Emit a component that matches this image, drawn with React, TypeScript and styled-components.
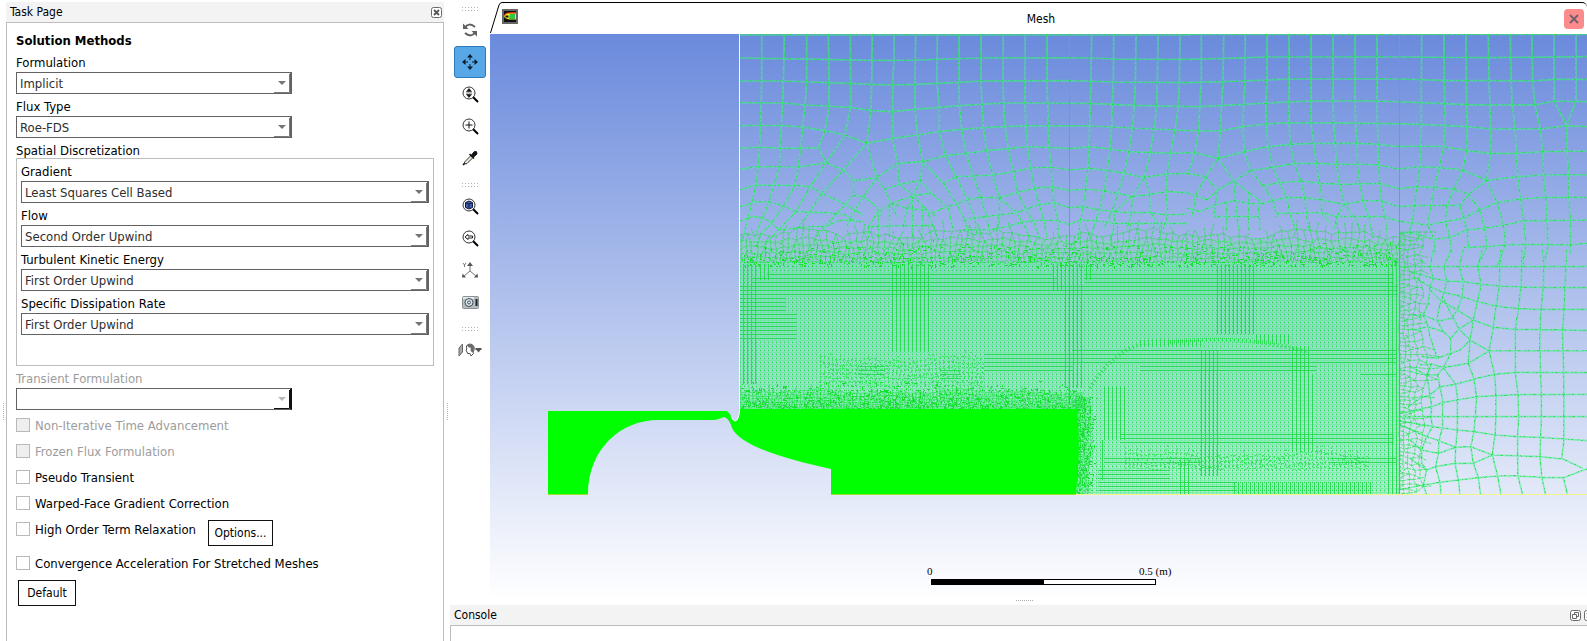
import React from "react";
import styled, { createGlobalStyle, css } from "styled-components";

const GlobalStyle = createGlobalStyle`
  *, *::before, *::after { box-sizing: border-box; }
  body { margin: 0; background: #fff; }
  body, select, input { font-family: "DejaVu Sans Condensed", "DejaVu Sans", sans-serif; font-size: 13px; }
  button { font-family: "DejaVu Sans Condensed", "DejaVu Sans", sans-serif; font-size: 12px; }
`;

/* ---------- layout ---------- */

const Window = styled.div`
  display: grid;
  grid-template-columns: 6px 438px 6px minmax(0, 1fr);
  min-height: 100vh;
  padding-top: 2px;
  color: #000;
  overflow: hidden;
`;

const SideGrip = styled.div`
  display: flex;
  align-items: center;
  justify-content: center;
  &::before {
    content: "";
    height: 17px;
    margin-top: 180px;
    border-left: 1px dotted #b4b4b4;
  }
`;

const TaskPanel = styled.section`
  display: flex;
  flex-direction: column;
`;

const PaneHeader = styled.header`
  display: flex;
  align-items: center;
  justify-content: space-between;
  height: 20px;
  padding: 0 2px 0 4px;
  background: #f3f3f3;
`;

const PaneTitle = styled.h2`
  margin: 0;
  font-size: 12px;
  font-weight: 400;
`;

const HeaderButtons = styled.div`
  display: flex;
  gap: 3px;
  margin-right: -8px;
`;

const IconButton = styled.button`
  display: flex;
  padding: 0;
  border: 0;
  background: none;
`;

const TaskBody = styled.form`
  flex: 1;
  padding: 9px 9px 8px;
  border: 1px solid #bdbdbd;
  border-bottom: 0;
`;

const Heading = styled.h1`
  margin: 0;
  font-size: 13px;
  line-height: 18px;
  font-weight: 700;
`;

const FieldLabel = styled.label<{ $muted?: boolean }>`
  display: block;
  height: 22px;
  padding-top: 4px;
  line-height: 18px;
  color: ${(p) => (p.$muted ? "#9c9c9c" : "#000")};
`;

const SelectBox = styled.div<{ $width?: string; $disabled?: boolean }>`
  display: grid;
  width: ${(p) => p.$width ?? "100%"};
  height: 22px;
  border: 1px solid #626262;
  border-right: 2px solid ${(p) => (p.$disabled ? "#111" : "#626262")};
  > * { grid-area: 1 / 1; }
  > svg { justify-self: end; align-self: end; pointer-events: none; }
`;

const Select = styled.select`
  appearance: none;
  width: 100%;
  height: 20px;
  padding: 1px 20px 0 3px;
  border: 0;
  background: #fff;
  color: #2e2e2e;
  &:disabled { opacity: 1; }
`;

const GroupTitle = styled.div`
  height: 20px;
  padding-top: 4px;
  line-height: 18px;
`;

const Group = styled.div`
  width: 418px;
  padding: 0 4px 30px;
  border: 1px solid #bdbdbd;
`;

const CheckList = styled.div`
  display: flex;
  flex-direction: column;
  padding-top: 2px;
`;

const CheckRow = styled.div<{ $tall?: boolean }>`
  display: flex;
  gap: 12px;
  height: ${(p) => (p.$tall ? "34px" : "26px")};
`;

const CheckLabel = styled.label<{ $muted?: boolean }>`
  display: flex;
  align-items: center;
  gap: 5px;
  height: 26px;
  color: ${(p) => (p.$muted ? "#9c9c9c" : "#000")};
`;

const CheckBox = styled.input`
  appearance: none;
  width: 14px;
  height: 14px;
  margin: 0;
  border: 1px solid #b9b9b9;
  background: #fff;
  &:disabled { background: #efefef; }
`;

const PushButton = styled.button<{ $width: string }>`
  width: ${(p) => p.$width};
  height: 26px;
  margin-top: 4px;
  padding: 0;
  border: 1px solid #111;
  background: #fff;
  color: #000;
`;

const DefaultRow = styled.div`
  padding-left: 2px;
`;

const Main = styled.main`
  display: flex;
  flex-direction: column;
  min-width: 0;
`;

const Workspace = styled.div`
  display: flex;
  flex: 1;
`;

const Toolbar = styled.nav`
  display: flex;
  flex-direction: column;
  align-items: center;
  width: 40px;
`;

const ToolDots = styled.svg`
  flex: none;
  margin: 9px 0 2px;
  &:first-child { margin-top: 5px; }
`;

const ToolButton = styled.button<{ $active?: boolean }>`
  display: flex;
  align-items: center;
  justify-content: center;
  width: 32px;
  height: 32px;
  padding: 0;
  border: 1px solid transparent;
  border-radius: 3px;
  background: none;
  ${(p) =>
    p.$active &&
    css`
      border-color: #2d78b8;
      background: #58a8e8;
    `}
`;

const Viewer = styled.section`
  display: flex;
  flex: 1;
  flex-direction: column;
  min-width: 0;
`;

const TabBar = styled.header`
  display: flex;
  align-items: center;
  height: 32px;
`;

const TabEdge = styled.svg`
  flex: none;
`;

const TabFace = styled.div`
  display: flex;
  flex: 1;
  align-items: center;
  align-self: stretch;
  padding-right: 3px;
  border-top: 1px solid #000;
  border-top-right-radius: 5px;
  > svg { align-self: flex-start; margin-top: 6px; }
`;

const TabTitle = styled.h2`
  flex: 1;
  margin: 0;
  font-size: 12px;
  font-weight: 400;
  text-align: center;
`;

const CloseButton = styled.button`
  display: flex;
  align-items: center;
  justify-content: center;
  width: 20px;
  height: 20px;
  padding: 0;
  border: 0;
  border-radius: 4px;
  background: #fc8b8b;
`;

const Canvas = styled.div`
  position: relative;
  flex: 1;
  min-height: 560px;
  background: linear-gradient(#6a8adc, #fff);
  > svg { position: absolute; inset: 0; width: 100%; height: 100%; }
`;

const BottomGrip = styled.div`
  height: 6px;
  padding: 1px 0 0 12px;
  &::before {
    content: "";
    display: block;
    width: 17px;
    margin: 0 auto;
    border-top: 1px dotted #aaa;
  }
`;

const Console = styled.section`
  display: flex;
  flex-direction: column;
  height: 36px;
`;

const ConsoleHeader = styled(PaneHeader)`
  height: 21px;
  padding-right: 0;
  border-bottom: 1px solid #bdbdbd;
  overflow: hidden;
`;

const ConsoleOut = styled.div`
  flex: 1;
  border-left: 1px solid #bdbdbd;
`;

/* ---------- form parts ---------- */

interface FieldProps {
  id: string;
  label: string;
  value: string;
  width?: string;
  disabled?: boolean;
}

function Field({ id, label, value, width, disabled }: FieldProps) {
  return (
    <div>
      <FieldLabel htmlFor={id} $muted={disabled}>{label}</FieldLabel>
      <SelectBox $width={width} $disabled={disabled}>
        <Select id={id} disabled={disabled} defaultValue={value}>
          <option value={value}>{value}</option>
        </Select>
        <svg width="16" height="20" viewBox="0 0 16 20" aria-hidden="true">
          <path d="M15.5 1V19.5H0" fill="none" stroke={disabled ? "#111" : "#7a7a7a"} />
          <path d="M4 8h8l-4 4z" fill={disabled ? "#bbb" : "#757575"} />
        </svg>
      </SelectBox>
    </div>
  );
}

function Check({ label, disabled }: { label: string; disabled?: boolean }) {
  return (
    <CheckLabel $muted={disabled}>
      <CheckBox type="checkbox" disabled={disabled} />
      {label}
    </CheckLabel>
  );
}

/* ---------- icons ---------- */

const Dots = () => (
  <ToolDots width="17" height="5" viewBox="0 0 17 5" aria-hidden="true">
    <path d="M0 .5H17M0 3.5H17" stroke="#b4b4b4" strokeDasharray="1 2" />
  </ToolDots>
);

const CloseGlyph = () => (
  <svg width="11" height="11" viewBox="0 0 11 11" aria-hidden="true">
    <rect x=".5" y=".5" width="10" height="10" rx="2" fill="#fff" stroke="#6a6a6a" />
    <path d="M3 3l5 5M8 3l-5 5" stroke="#555" strokeWidth="1.8" />
  </svg>
);

const FloatGlyph = () => (
  <svg width="11" height="11" viewBox="0 0 11 11" aria-hidden="true">
    <rect x=".5" y=".5" width="10" height="10" rx="2" fill="#fff" stroke="#6a6a6a" />
    <path d="M4.5 4.500V2.500h4v4h-2M2.500 4.500h4v4h-4z" fill="none" stroke="#666" />
  </svg>
);

const Lens = ({ children }: { children?: React.ReactNode }) => (
  <svg width="17" height="17" viewBox="0 0 17 17" aria-hidden="true">
    <circle cx="7" cy="7" r="6" fill="#fff" stroke="#333" />
    <path d="M11.200 11.200l4.800 4.800" stroke="#000" strokeWidth="2" />
    {children}
  </svg>
);

const RotateIcon = () => (
  <svg width="16" height="16" viewBox="0 0 16 16" aria-hidden="true">
    <path d="M3 5.500C5 2 9 1.500 13 5M13 10.500C11 14 7 14.500 3 11" fill="none" stroke="#606060" strokeWidth="2" />
    <path d="M1 1.500v5.500h5.500zM15 14.500V9H9.500z" fill="#606060" />
  </svg>
);

const MoveIcon = () => (
  <svg width="16" height="16" viewBox="0 0 16 16" aria-hidden="true">
    <path d="M8 2v4M8 10v4M2 8h4M10 8h4" stroke="#0b1c2b" />
    <path d="M8 0l3 3.500H5zM8 16l3-3.500H5zM0 8l3.500-3v6zM16 8l-3.500-3v6z" fill="#0b1c2b" />
  </svg>
);

const ProbeIcon = () => (
  <svg width="16" height="16" viewBox="0 0 16 16" aria-hidden="true">
    <path d="M2 14l1-2.500 6-6 2 2-6 6z" fill="#efe6da" stroke="#333" />
    <path d="M7.500 4l4.500 4.500M1 15l1.500-1.500" stroke="#111" strokeWidth="1.600" />
    <path d="M9.500 5l3-3.500 2 .2.500 2.300-3.500 3z" fill="#111" stroke="#111" />
  </svg>
);

const AxesIcon = () => (
  <svg width="16" height="17" viewBox="0 0 16 17" aria-hidden="true">
    <path d="M8 2v7L2 14M8 9l6 5M1 1l1.500 2L4 1M2.500 3v2" fill="none" stroke="#777" />
    <path d="M8 0l3 4H5zM0 15.500l.5-4 3.500 4zM16 15.500l-.5-4-3.500 4z" fill="#555" />
  </svg>
);

const CameraIcon = () => (
  <svg width="17" height="14" viewBox="0 0 17 14" aria-hidden="true">
    <rect x=".5" y="1.500" width="16" height="12" rx="1" fill="#b5bcbf" stroke="#8b9295" />
    <path d="M1 3h11" stroke="#e3e8ea" strokeWidth="2" />
    <circle cx="7" cy="7.500" r="4" fill="#dce5e9" stroke="#424a50" />
    <circle cx="7" cy="7.500" r="1.500" fill="#dce5e9" stroke="#3f5568" />
    <path d="M14.500 4v7" stroke="#222" strokeWidth="2" />
  </svg>
);

const HeadIcon = () => (
  <svg width="24" height="14" viewBox="0 0 24 14" aria-hidden="true">
    <path d="M1 5L4.500 1v8L1 13z" fill="#aaa" stroke="#666" />
    <path d="M8.500 3C10 .5 14 .5 15.500 3c1.500 2.500.5 4.500-.5 6l.5 1.500L13 13l-1-2.500H9.500L9 8.500 8 8l.7-2z" fill="#fff" stroke="#555" />
    <path d="M9 2.500c3-2.500 7-1 7 2.500 0 2-.5 3-1.500 4.500L12.500 8c.8-1-.2-2 .3-3.500C11.500 5 10 4 9 2.500z" fill="#6a6a6a" />
    <path d="M17.500 5h6v2h-1l-2 2.500-2-2.500h-1z" fill="#555" />
  </svg>
);

const FluentIcon = () => (
  <svg width="16" height="15" viewBox="0 0 16 15" aria-hidden="true">
    <rect x="1" y="1" width="14" height="13" fill="#111" stroke="#666" strokeWidth="2" />
    <path d="M2 6c1-3 7-3 12-3v2L8 6 3 8z" fill="#e32b13" />
    <path d="M2 7l3-2.500h9v6H7L3 9z" fill="#e9ec18" />
    <path d="M8 5h5v5H7z" fill="#2cc842" />
    <path d="M3.500 6.500h3v2h-3z" fill="#111" />
  </svg>
);

/* ---------- mesh drawing ---------- */

function makeRandom(seed: number) {
  let s = seed;
  return () => {
    s = (s * 1664525 + 1013904223) % 4294967296;
    return s / 4294967296;
  };
}

/*
 * Unstructured band between two lines. The cell size runs from a to b across it,
 * and the first row stays open so that the band merges with what lies outside.
 */
function band(
  seed: number,
  from: number,
  to: number,
  lo: number,
  hi: number,
  a: number,
  b: number,
  swap = false,
) {
  const rnd = makeRandom(seed);
  const rows: [number, number][][] = [];
  let y = from;
  const dir = to > from ? 1 : -1;
  while ((to - y) * dir >= 0) {
    const t = (y - from) / (to - from);
    const size = a + (b - a) * t;
    const row: [number, number][] = [];
    for (let x = lo; x <= hi; x += size * (0.7 + rnd() * 0.6)) {
      const wave = Math.sin(x / 27) * 0.5 + Math.sin(x / 11 + seed) * 0.4;
      row.push([x, y + (rnd() - 0.5) * size * 0.7 + wave * size * (1 - t)]);
    }
    rows.push(row);
    y += size * dir;
  }
  const pt = (p: [number, number]) =>
    swap ? `${p[1].toFixed(1)} ${p[0].toFixed(1)}` : `${p[0].toFixed(1)} ${p[1].toFixed(1)}`;
  let d = "";
  rows.forEach((row, i) => {
    if (i > 0) d += "M" + row.map(pt).join("L");
    const next = rows[i + 1];
    if (!next) return;
    next.forEach((q) => {
      if (i === 0 && rnd() < 0.5) return;
      let best = row[0];
      for (const p of row) if (Math.abs(p[0] - q[0]) < Math.abs(best[0] - q[0])) best = p;
      d += `M${pt(best)}L${pt(q)}`;
    });
  });
  return d;
}

/* Short strokes scattered over a box, thicker towards the high end of y (or x when swapped) */
function speckle(seed: number, x0: number, y0: number, w: number, h: number, count: number, swap = false) {
  const rnd = makeRandom(seed);
  let d = "";
  for (let i = 0; i < count; i++) {
    const along = Math.round(rnd() * w);
    const across = Math.round(Math.sqrt(rnd()) * h);
    const x = swap ? x0 + w - Math.round(Math.sqrt(rnd()) * w) : x0 + along;
    const y = swap ? Math.round(y0 + rnd() * h) : y0 + across;
    d += rnd() < 0.5 ? `M${x} ${y + 0.5}h${1 + Math.round(rnd() * 2)}` : `M${x + 0.5} ${y}v${1 + Math.round(rnd() * 2)}`;
  }
  return d;
}

/* Equally spaced runs: [start, end, low, high] */
type Run = [number, number, number, number];
const columns = (runs: Run[]) =>
  runs.map(([a, b, lo, hi]) => {
    let d = "";
    for (let x = a; x <= b; x += 4) d += `M${x + 0.5} ${lo}V${hi}`;
    return d;
  }).join("");
const lines = (runs: Run[]) =>
  runs.map(([a, b, lo, hi]) => {
    let d = "";
    for (let y = a; y <= b; y += 4) d += `M${lo} ${y + 0.5}H${hi}`;
    return d;
  }).join("");

const upperLeft = [
  "95,15 95,152 92,285 85,410 75,480 60,540 45,600 35,640",
  "163,15 162,85 158,220 150,355 148,410 130,470 112,530 95,570 70,630",
  "230,15 230,155 225,225 212,355 205,410 193,470 160,528 125,578 95,610 75,650",
  "295,15 297,155 297,230 285,302 265,352 288,398 240,470 198,545 145,600 100,650",
  "361,15 362,155 362,230 345,315 288,398",
  "427,15 425,165 423,240 410,340 440,443 463,478 485,520 500,560",
  "410,340 340,420 275,490 240,545 200,600",
  "440,443 400,500 375,540 350,590",
  "492,15 492,90 488,163 488,325 503,400 508,463 550,497 590,540 610,590 625,630",
  "557,15 555,165 555,238 562,313 578,395 570,452 550,497 530,540 520,590",
  "578,395 640,460 680,522 705,570 715,620",
  "570,452 605,490 655,535 670,600",
  "622,15 621,160 628,230 628,305 645,375 678,440 712,508 735,563 740,620",
  "687,15 687,158 688,225 695,297 708,370 730,437 752,500 770,560 780,615",
  "753,15 753,153 756,222 760,293 770,362 788,435 808,503 860,548 890,600 905,640",
  "808,503 808,555 800,600",
  "820,15 819,153 821,220 825,292 835,356 850,425 863,487 888,538 915,585 930,630",
  "886,15 885,152 885,220 888,288 893,352 902,414 914,477 928,525 943,578 950,620",
  "951,15 951,152 953,220 955,287 957,352 963,412 967,470 973,520 983,573 985,620",
  "1085,15 1083,155 1081,220 1079,290 1077,352 1074,415 1067,478 1058,535 1050,580 1045,630",
  "1151,15 1150,155 1147,222 1145,290 1140,357 1132,420 1122,485 1108,540 1092,590 1080,630",
  "1218,15 1216,155 1213,225 1207,295 1197,365 1182,430 1164,490 1145,545 1120,600",
  "1284,15 1282,155 1280,225 1273,297 1260,368 1243,440 1207,500 1205,548 1190,600",
  "1243,440 1260,493 1260,548 1290,590 1290,630",
  "1350,15 1348,155 1345,230 1335,300 1322,370 1310,432 1310,487 1312,555 1300,600",
  "1205,500 1155,545 1150,600 1140,640",
  "30,15 1380,15",
  "30,84 163,86 427,91 557,90 753,84 951,83 1085,84 1151,87 1371,88",
  "30,153 163,153 297,158 427,163 488,165 557,163 687,157 753,153 1018,152 1151,156 1371,158",
  "30,218 158,219 225,225 362,232 423,242 488,245 555,238 688,227 821,219 953,219 1080,220 1213,226 1371,230",
  "30,287 155,286 218,291 285,302 345,315 410,340 488,325 562,315 628,305 695,298 760,293 888,287 1079,288 1145,291 1273,297 1371,302",
  "30,355 90,351 150,355 265,353",
  "503,400 578,395 645,377 708,370 770,362 893,350 957,352 1018,356 1079,350 1140,357 1197,365 1322,370 1371,368",
  "30,418 85,410 205,411 288,398 340,420 370,452 440,443 503,400",
  "678,440 730,438 788,435 850,425 902,414 963,411 1018,420 1074,415 1132,421 1182,430 1243,442 1310,432 1371,430",
  "30,480 75,465 193,466 240,470 275,490 345,523 400,555",
  "463,478 508,463 570,452",
  "640,460 678,440",
  "752,502 808,503 863,487 914,475 967,470 1018,482 1067,477 1122,483 1164,490 1207,500 1260,493 1310,485 1371,488",
  "30,531 75,516 120,516 160,527 198,545 240,547 285,548 345,555 375,575",
  "370,452 370,495 345,523 285,590 260,620",
  "370,495 400,500 435,525 455,560",
  "485,520 550,497 605,490",
  "605,550 650,530 680,522 712,508 752,502",
  "700,572 735,563 770,560 808,555 860,548 888,538 928,523 973,518 1018,533 1058,530 1108,540 1155,545 1205,548 1260,548 1312,555 1371,552",
  "30,573 65,560 95,562 125,578 145,600 240,590 285,590 330,570 400,575",
  "415,590 440,550 485,520 530,535 590,540 620,560",
  "415,625 415,590 480,588 540,588 610,585",
  "445,620 445,545",
  "478,620 478,520",
  "548,620 548,500",
  "575,620 578,530",
  "700,600 770,600 830,590 880,575 943,570 985,573 1018,583 1050,570 1092,572 1150,580 1205,580 1290,580 1371,580",
];

const upperRight = [
  "43,105 43,245 38,320 35,392 23,458 3,520",
  "110,105 108,245 104,315 100,393 93,475 55,530 25,590 15,650",
  "175,105 174,245 170,313 168,380 172,455 190,512 228,557 258,602 270,650",
  "93,475 140,543 185,577 230,610",
  "190,512 140,543 145,600 155,690",
  "240,105 240,240 237,308 238,372 243,440 257,502 278,548 298,592 308,640 325,685",
  "306,105 306,300 306,368 310,433 322,490 342,543 353,593 358,640 365,690",
  "372,105 372,370 380,430 388,490 398,550 405,600 403,640 430,670",
  "438,105 438,303 440,367 445,430 448,493 457,553 473,613 505,655 520,690",
  "473,613 450,650 440,690",
  "504,105 504,300 506,370 510,430 511,492 518,550 528,603 545,650 555,700",
  "570,105 570,300 571,370 573,433 575,495 578,550 583,602 595,650 600,700",
  "704,105 703,310 703,373 702,438 698,500 690,560 682,617 675,670 665,700",
  "771,105 773,310 775,375 770,440 757,503 742,560 732,615 722,675 740,715 745,760",
  "837,105 839,315 840,380 839,452 827,510 800,568 780,615 775,665 790,720 795,760",
  "827,510 898,541",
  "904,105 906,240 909,315 911,385 911,460 898,541 845,583 818,617 830,655 840,690 845,750",
  "970,105 972,240 976,315 984,385 988,460 992,530 1000,597 1010,660 1016,735 1007,800",
  "898,541 930,608 950,675 955,735 930,800",
  "845,583 877,630 893,685 900,740 870,800",
  "1035,105 1037,240 1044,315 1060,387 1067,455 1070,530 1076,597 1080,660 1083,735 1075,780",
  "1101,105 1101,303 1139,375 1140,453 1146,525 1146,597 1150,660 1150,760",
  "1167,105 1167,303 1139,375",
  "0,103 1200,103",
  "0,178 110,175 240,171 640,171 900,173 1200,170",
  "0,248 110,245 240,240 306,237 636,237 770,241 1035,243 1100,238 1200,238",
  "0,320 40,320 170,313 240,309 370,303 570,303 703,308 840,314 1044,315 1101,303 1200,305",
  "0,392 100,393 168,380 238,372 306,368 570,370 703,373 840,380 911,387 1060,387 1139,377 1200,380",
  "0,458 23,458 93,475 172,455 243,440 310,433 380,430 510,430 573,433 636,440 702,438 770,440 839,452 911,460 988,460 1067,455 1200,453",
  "0,520 55,530 93,570 85,615 82,650 160,650 215,650",
  "118,690 118,605",
  "185,690 185,577",
  "218,690 215,612",
  "190,512 257,502 322,490 388,490 448,493 511,492 575,495 636,507 698,500 757,503 827,510",
  "898,541 992,530 1070,525 1200,525",
  "0,578 60,600",
  "60,600 93,570 140,543",
  "228,557 278,548 342,543 398,550 457,553 578,550 636,566 690,560 742,562 800,568 845,583",
  "877,630 930,608 1000,597 1076,592 1200,592",
  "0,625 40,635 85,615 145,600 185,612 230,610 258,602 298,592 353,593 405,600 473,613 528,603 583,602 636,620 682,617 780,615 818,617",
  "270,640 403,638 450,650 545,650 595,650 636,664 720,675 775,665 830,655 877,630",
  "840,690 893,685 950,675 1010,663 1080,662 1200,660",
  "640,700 670,698 740,718 790,712 840,690",
  "830,742 900,740 955,735 1016,733 1150,735 1200,730",
];

const right = [
  "1520,0 1518,50 1515,110 1512,180 1508,240 1509,305 1511,370 1512,433 1512,500 1512,570 1505,625 1568,655",
  "1585,655 1510,683 1523,735",
  "1448,0 1452,50 1450,110 1443,180 1440,240 1440,305 1442,367 1444,433 1444,500 1442,565 1440,620 1445,680 1457,735",
  "1386,0 1385,50 1383,110 1375,178 1366,238 1366,305 1366,367 1374,433 1376,500 1373,560 1373,615 1374,678 1388,735",
  "1323,0 1320,50 1318,108 1308,170 1300,232 1287,303 1304,373 1308,437 1308,500 1305,555 1297,615 1313,678 1323,735",
  "1265,0 1254,50 1263,105 1252,155 1240,210 1230,270 1287,303",
  "1225,340 1242,387 1250,443 1246,500 1242,545 1232,590 1240,640 1255,683 1262,735",
  "1210,0 1198,50 1210,95 1207,140 1192,180 1175,205",
  "1230,270 1225,340",
  "1240,210 1197,237 1172,265 1172,310 1150,353",
  "1150,353 1187,403 1192,440 1192,540 1187,592 1185,640 1195,690 1200,735",
  "1172,0 1152,50 1160,95 1152,128 1135,180 1132,213 1150,245 1172,265",
  "1133,375 1140,410 1148,450 1148,530 1137,572 1135,610 1127,650 1140,697 1143,735",
  "1120,0 1110,50 1120,85 1110,110 1105,160 1090,195 1105,230 1110,260 1132,325",
  "1115,342 1100,375 1110,435 1115,470 1112,500 1118,530 1100,560 1085,600 1085,640 1100,660 1090,705 1100,735",
  "1015,50 1568,50 1585,48",
  "1050,65 1120,85 1160,93 1210,95 1263,103 1318,108 1383,111 1450,112 1585,113",
  "1060,80 1110,110 1152,128 1207,140 1252,155 1308,168 1375,176 1443,178 1585,178",
  "1110,120 1140,150 1192,180 1240,210 1300,232 1366,238 1585,241",
  "1060,195 1090,195 1132,213 1175,205",
  "1152,150 1197,237 1230,270",
  "1060,240 1105,230 1150,245",
  "1085,320 1132,325 1172,310 1200,300 1230,272",
  "1287,303 1585,303",
  "1080,345 1115,342 1150,353 1225,340 1287,303",
  "1050,350 1100,375 1133,375 1150,353",
  "1045,470 1080,445 1110,435 1140,410 1187,403 1242,387 1304,373 1366,367 1585,368",
  "1020,490 1115,470 1148,458 1192,450 1250,440 1308,437 1374,434 1585,433",
  "1015,500 1585,500",
  "1015,512 1120,530 1192,540 1242,545 1305,555 1373,560 1442,562 1512,567 1585,572",
  "1020,525 1100,560 1137,572 1187,592 1232,590 1297,615 1440,620 1505,627",
  "1050,570 1085,600 1135,610 1187,592",
  "1050,625 1100,660 1127,650 1185,640 1240,640 1297,615",
  "1015,720 1090,705 1140,697 1195,690 1255,683 1313,678 1374,678 1445,682 1510,683",
];

const asPath = (list: string[]) => list.map((p) => "M" + p.split(" ").join("L")).join("");

const coarse = [
  { d: asPath(upperLeft), t: "translate(730 30) scale(.33333)", top: 200 },
  { d: asPath(upperRight), t: "translate(1187 0) scale(.33333)", top: 290 },
  { d: asPath(right), t: "translate(1060 250) scale(.33333)", top: 0 },
];

const topBand = band(7, 226, 264, 741, 1400, 8, 3.5);
const rightBand = band(19, 1432, 1400, 232, 494, 9, 3.5, true);
const blockTop = band(31, 388, 410, 741, 1085, 4, 2);
const blockSide = band(43, 1094, 1075, 398, 494, 4, 2, true);
const swirl = band(57, 354, 388, 820, 985, 5, 4) + band(61, 450, 470, 1125, 1370, 5, 4);
const noise =
  speckle(3, 741, 380, 335, 30, 900) +
  speckle(5, 741, 240, 658, 26, 900) +
  speckle(9, 1076, 396, 20, 98, 300, true);

const darkColumns = columns([
  [743, 755, 264, 384], [760, 768, 264, 280], [892, 928, 264, 352], [1053, 1061, 264, 290],
  [1065, 1081, 264, 388], [1086, 1090, 264, 280], [1217, 1253, 264, 334], [1201, 1217, 350, 476],
  [1292, 1308, 346, 452], [1312, 1312, 375, 452], [1388, 1396, 262, 494], [1104, 1124, 386, 440],
  [1140, 1200, 340, 347], [1256, 1290, 334, 344], [1180, 1188, 460, 494], [1234, 1370, 482, 494],
  [1102, 1102, 440, 480],
]);
const darkLines = lines([
  [274, 274, 767, 1053], [278, 294, 752, 1058], [274, 294, 1084, 1394], [286, 294, 740, 1398],
  [298, 310, 741, 786], [314, 338, 741, 797], [354, 370, 985, 1072], [350, 362, 1072, 1396],
  [366, 370, 1140, 1316], [374, 374, 1360, 1396], [366, 374, 858, 884], [370, 378, 940, 960],
  [434, 442, 1120, 1394], [458, 462, 1104, 1200], [470, 478, 1098, 1170], [482, 494, 1098, 1237],
  [458, 462, 1330, 1396],
]);

function MeshView() {
  return (
    <svg viewBox="490 34 1097 565" preserveAspectRatio="xMinYMin slice" role="img" aria-label="Mesh">
      <defs>
        <pattern id="cells" width="4" height="4" patternUnits="userSpaceOnUse">
          <path d="M0 .500H4M.500 0V4" stroke="#3df77c" strokeWidth="1" opacity=".5" />
          <path d="M0 2H4M2 0V4" stroke="#54f590" strokeWidth="2" opacity=".26" />
        </pattern>
        <pattern id="nodes" width="4" height="4" patternUnits="userSpaceOnUse">
          <rect y="2" width="1" height="1" fill="#22d94b" />
        </pattern>
      </defs>

      {coarse.map((c) => (
        <g key={c.t} transform={c.t} fill="none">
          <path d={c.d} stroke="#45f08a" strokeWidth="5" opacity=".6" />
          <path d={c.d} stroke="#1ddc3c" strokeWidth="3" strokeDasharray="7 13 3 6" opacity=".7" shapeRendering="crispEdges" />
        </g>
      ))}

      <path d="M740 263H1400V494H1076V410H740z" fill="#8fe0b0" opacity=".34" />
      <path d="M740 240H1400V263H740z" fill="#6fe8a0" opacity=".3" />
      <path d="M740 262H1400V494H1076V410H740z" fill="url(#cells)" />
      <path d="M740 262H1400V494H1076V410H740z" fill="url(#nodes)" />

      <g fill="none" stroke="#22e448">
        <path d={topBand} strokeWidth="1" strokeDasharray="3 1" opacity=".75" />
        <path d={rightBand} strokeWidth="1" strokeDasharray="3 1" opacity=".75" />
        <path d={swirl} strokeWidth="1" strokeDasharray="2 2" opacity=".7" shapeRendering="crispEdges" />
        <path d={blockTop} strokeWidth="1" opacity=".6" />
        <path d={blockSide} strokeWidth="1" opacity=".6" />
        <path d={noise} strokeWidth="1" stroke="#18e030" shapeRendering="crispEdges" />
        <path d={darkColumns + darkLines} stroke="#22d94b" opacity=".9" shapeRendering="crispEdges" />
        <path d="M1090 388C1112 352 1140 338 1170 342M1170 342C1210 338 1260 338 1306 352" strokeWidth="4" strokeDasharray="1 3" />
        <path d="M1069.500 34V405M1399.500 34V494" stroke="#1fdc45" />
      </g>

      <path
        d="M548 411H727Q731 414 732 419Q735 423 738 419L740 409H1077Q1081 450 1076 494H831V469Q742 450 732 428Q729 418 724 417Q717 420 714 420H658C620 420 588 450 588 494H548z"
        fill="#00ff00"
      />
      <path d="M739.500 34V412Q738 421 735 421Q732 420 731 416" fill="none" stroke="#f6f9ff" />
      <path d="M548 494.500H588M831 494.500H1076" stroke="#9be22a" />
      <path d="M1076 494.500H1900" stroke="#f1f28a" />

      <g fontFamily="'Liberation Serif', serif" fontSize="11">
        <text x="927" y="575">0</text>
        <text x="1139" y="575">0.5 (m)</text>
      </g>
      <rect x="931.500" y="579.500" width="224" height="5" fill="#fff" stroke="#000" />
      <rect x="931" y="579" width="113" height="6" />
    </svg>
  );
}

/* ---------- page ---------- */

const tools = [
  { name: "Rotate view", icon: <RotateIcon /> },
  { name: "Pan", icon: <MoveIcon />, active: true },
  { name: "Zoom in and out", icon: <Lens><path d="M7 2.500l2.500 3h-5zM7 11.500l2.500-3h-5zM4 7h6" fill="#111" stroke="#111" strokeWidth=".6" /></Lens> },
  { name: "Zoom to area", icon: <Lens><path d="M7 3.500v7M3.500 7h7" stroke="#111" /></Lens> },
  { name: "Probe", icon: <ProbeIcon /> },
];
const viewTools = [
  { name: "Fit to window", icon: <Lens><path d="M3.500 4.500L7 3l3.500 1.500v5L7 11 3.500 9.500z" fill="#3e5fae" stroke="#111c44" /><path d="M4 5l3 1 3-1M7 6v4" fill="none" stroke="#111c44" /></Lens> },
  { name: "Last view", icon: <Lens><path d="M3 7l3-2.500V6h4.500v2H6v1.500z" fill="#fff" stroke="#222" /></Lens> },
  { name: "Set view", icon: <AxesIcon /> },
  { name: "Save picture", icon: <CameraIcon /> },
];

export default function App() {
  return (
    <Window>
      <GlobalStyle />
      <SideGrip />
      <TaskPanel>
        <PaneHeader>
          <PaneTitle>Task Page</PaneTitle>
          <IconButton aria-label="Close task page"><CloseGlyph /></IconButton>
        </PaneHeader>
        <TaskBody onSubmit={(e) => e.preventDefault()}>
          <Heading>Solution Methods</Heading>
          <Field id="formulation" label="Formulation" value="Implicit" width="276px" />
          <Field id="flux" label="Flux Type" value="Roe-FDS" width="276px" />
          <GroupTitle id="spatial">Spatial Discretization</GroupTitle>
          <Group role="group" aria-labelledby="spatial">
            <Field id="gradient" label="Gradient" value="Least Squares Cell Based" />
            <Field id="flow" label="Flow" value="Second Order Upwind" />
            <Field id="tke" label="Turbulent Kinetic Energy" value="First Order Upwind" />
            <Field id="sdr" label="Specific Dissipation Rate" value="First Order Upwind" />
          </Group>
          <Field id="transient" label="Transient Formulation" value="" width="276px" disabled />
          <CheckList>
            <CheckRow><Check label="Non-Iterative Time Advancement" disabled /></CheckRow>
            <CheckRow><Check label="Frozen Flux Formulation" disabled /></CheckRow>
            <CheckRow><Check label="Pseudo Transient" /></CheckRow>
            <CheckRow><Check label="Warped-Face Gradient Correction" /></CheckRow>
            <CheckRow $tall>
              <Check label="High Order Term Relaxation" />
              <PushButton type="button" $width="65px">Options...</PushButton>
            </CheckRow>
            <CheckRow><Check label="Convergence Acceleration For Stretched Meshes" /></CheckRow>
          </CheckList>
          <DefaultRow><PushButton type="button" $width="58px">Default</PushButton></DefaultRow>
        </TaskBody>
      </TaskPanel>
      <SideGrip />
      <Main>
        <Workspace>
          <Toolbar aria-label="View tools">
            <Dots />
            {tools.map((t) => (
              <ToolButton key={t.name} aria-label={t.name} $active={t.active}>{t.icon}</ToolButton>
            ))}
            <Dots />
            {viewTools.map((t) => (
              <ToolButton key={t.name} aria-label={t.name}>{t.icon}</ToolButton>
            ))}
            <Dots />
            <ToolButton aria-label="Viewpoint"><HeadIcon /></ToolButton>
          </Toolbar>
          <Viewer>
            <TabBar>
              <TabEdge width="12" height="32" viewBox="0 0 12 32" aria-hidden="true">
                <path d="M.500 31L9 3Q10 .500 12 .500" fill="none" stroke="#000" />
              </TabEdge>
              <TabFace>
                <FluentIcon />
                <TabTitle>Mesh</TabTitle>
                <CloseButton aria-label="Close mesh window">
                  <svg width="10" height="10" viewBox="0 0 10 10" aria-hidden="true">
                    <path d="M1 1l8 8M9 1L1 9" stroke="#74606c" strokeWidth="2" />
                  </svg>
                </CloseButton>
              </TabFace>
            </TabBar>
            <Canvas><MeshView /></Canvas>
          </Viewer>
        </Workspace>
        <BottomGrip />
        <Console>
          <ConsoleHeader>
            <PaneTitle>Console</PaneTitle>
            <HeaderButtons>
              <IconButton aria-label="Float console"><FloatGlyph /></IconButton>
              <IconButton aria-label="Close console"><CloseGlyph /></IconButton>
            </HeaderButtons>
          </ConsoleHeader>
          <ConsoleOut />
        </Console>
      </Main>
    </Window>
  );
}
